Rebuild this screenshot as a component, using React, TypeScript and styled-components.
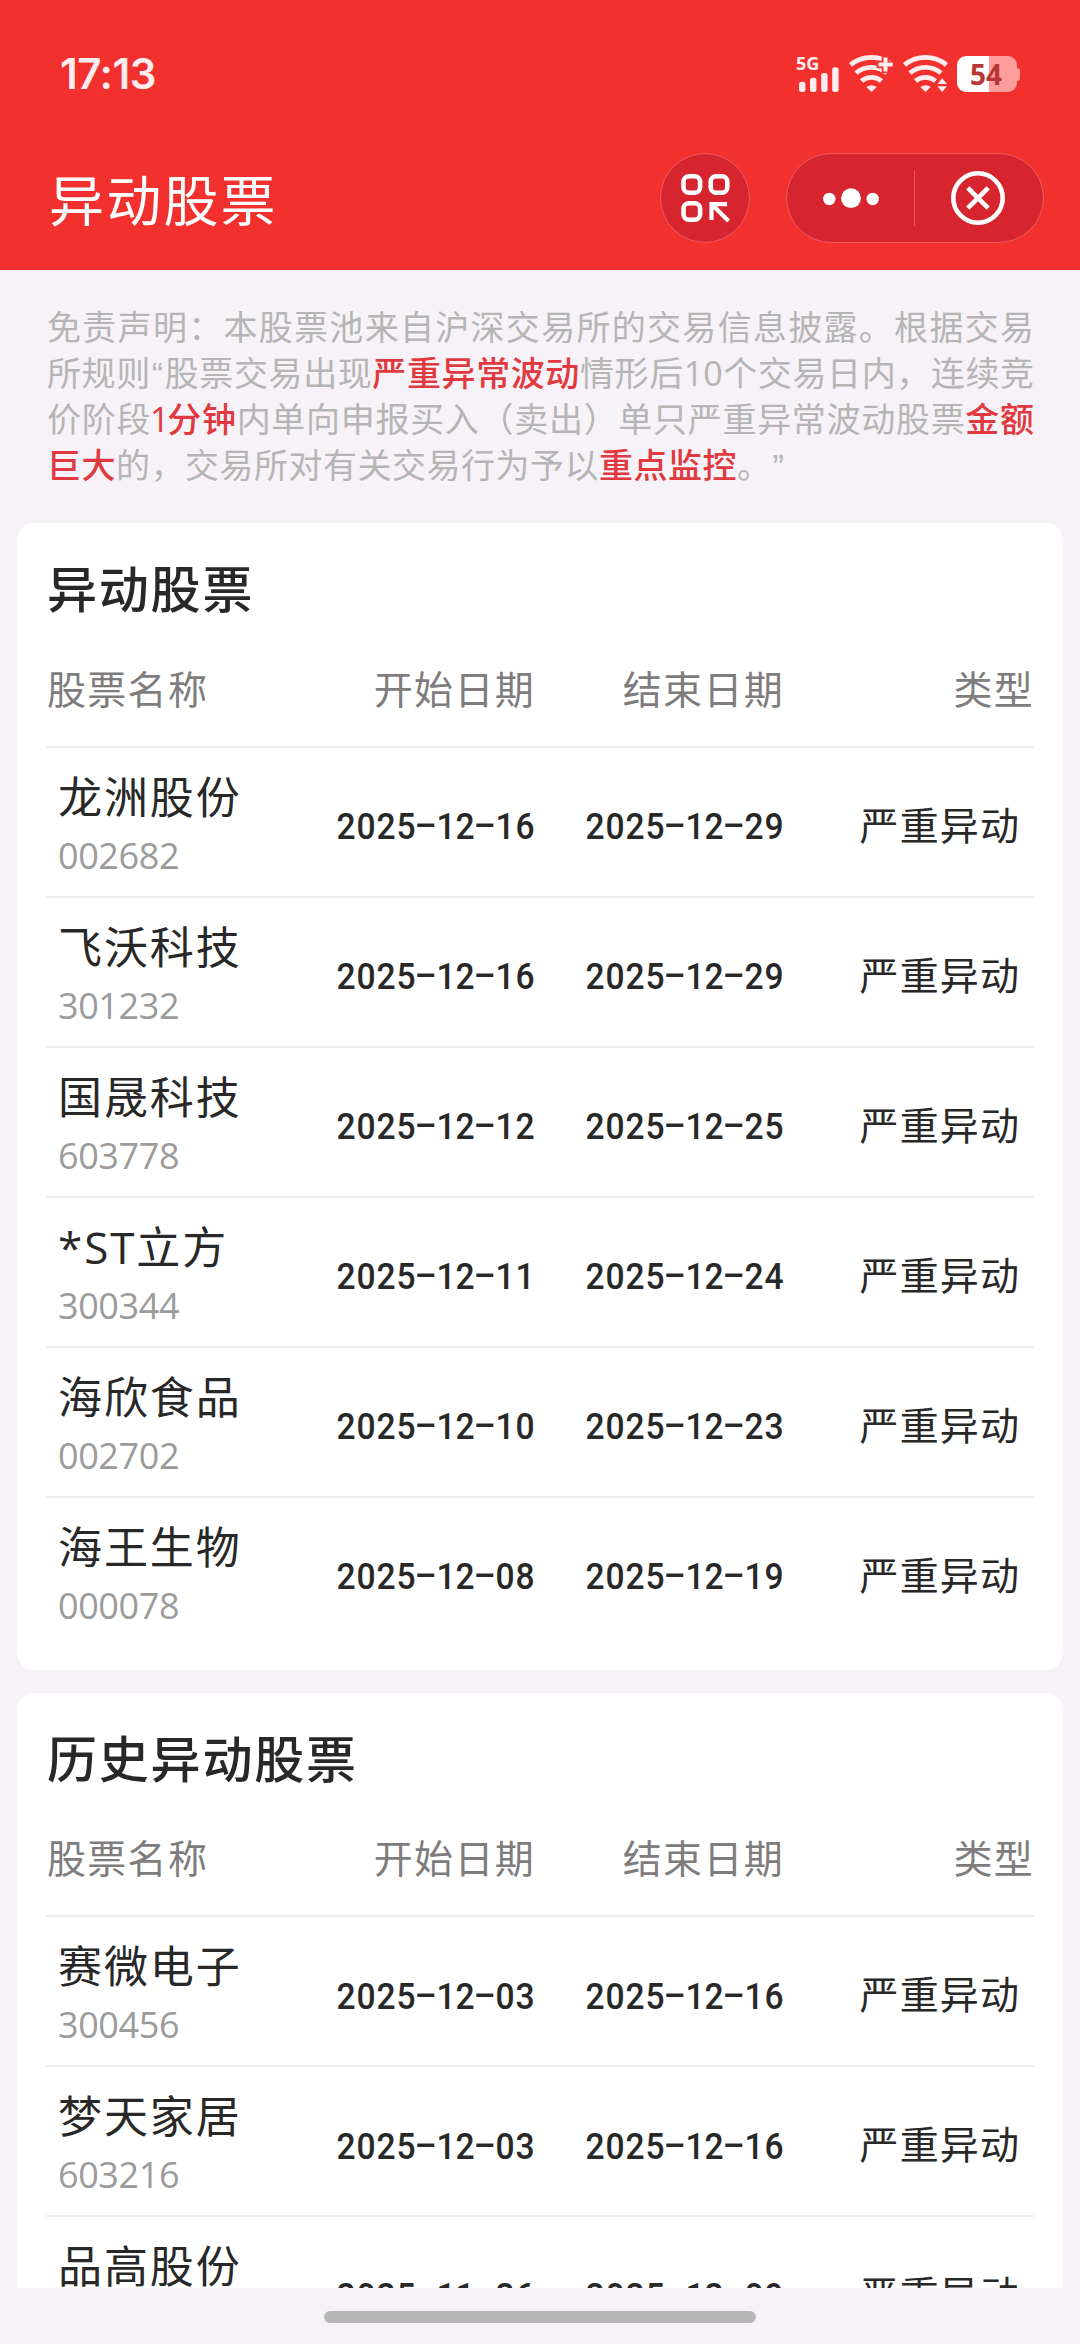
import React from 'react';
import styled, { createGlobalStyle } from 'styled-components';

const GlobalStyle = createGlobalStyle`
  html, body { margin: 0; padding: 0; background: #f7f2f7; }
  * { box-sizing: border-box; }
`;

const sans = `"Open Sans", "Noto Sans CJK SC", sans-serif`;

const Screen = styled.div`
  width: 1080px;
  height: 2344px;
  display: flex;
  flex-direction: column;
  overflow: hidden;
  background: #f7f2f7;
  color: #282828;
  font-family: ${sans};
`;

const Header = styled.header`
  flex: none;
  height: 270px;
  background: #f2312f;
  color: #fff;
`;

const StatusBar = styled.div`
  height: 148px;
  padding: 0 60px 0 60px;
  display: flex;
  align-items: center;
  justify-content: space-between;
`;

const Clock = styled.span`
  font-family: Inter, sans-serif;
  font-weight: 600;
  font-size: 42px;
  line-height: 50px;
  letter-spacing: -0.5px;
  color: #ffecee;
`;

const StatusIcons = styled.div`
  display: flex;
  align-items: center;
`;

const Signal = styled.div`
  width: 52px;
  height: 36px;
  position: relative;
`;

const NetworkLabel = styled.span`
  position: absolute;
  left: -1px;
  top: -2px;
  font-size: 18px;
  line-height: 18px;
  font-weight: 700;
  color: #ffecee;
`;

const Glyph = styled.svg`
  display: block;
  overflow: visible;
`;

const Battery = styled.div`
  display: flex;
  align-items: center;
  margin-left: 7px;
`;

const BatteryBody = styled.div`
  width: 60px;
  height: 36px;
  padding-right: 2px;
  border-radius: 9px;
  display: flex;
  align-items: center;
  justify-content: center;
  background: linear-gradient(90deg, #fff 32px, #fd9d9b 32px);
  color: #b83636;
  font-size: 28px;
  line-height: 36px;
  font-weight: 700;
`;

const BatteryTip = styled.div`
  width: 3px;
  height: 13px;
  border-radius: 0 3px 3px 0;
  background: #fd9d9b;
`;

const NavBar = styled.div`
  display: flex;
  align-items: center;
  padding: 5px 36px 0 49px;
`;

const NavTitle = styled.h1`
  flex: 1;
  margin: 0;
  padding-top: 4px;
  font-size: 55px;
  line-height: 86px;
  font-weight: 400;
  letter-spacing: 2.2px;
`;

const RoundButton = styled.button`
  width: 90px;
  height: 90px;
  padding: 0;
  margin-right: 36px;
  display: flex;
  align-items: center;
  justify-content: center;
  border: 1px solid #ee5a60;
  border-radius: 50%;
  background: #d72530;
`;

const Capsule = styled.div`
  width: 258px;
  height: 90px;
  display: flex;
  align-items: center;
  border: 1px solid #ee5a60;
  border-radius: 45px;
  background: #d72530;
`;

const CapsuleButton = styled.button<{ $first?: boolean }>`
  width: ${p => (p.$first ? 128 : 126)}px;
  height: 56px;
  padding: 0;
  display: flex;
  align-items: center;
  justify-content: center;
  border: 0;
  border-right: ${p => (p.$first ? '1px solid #e7545b' : '0')};
  background: none;
`;

const Content = styled.main`
  flex: none;
  height: 2018px;
  overflow: hidden;
  padding: 34px 17px 0;
  display: flex;
  flex-direction: column;
`;

const Disclaimer = styled.section`
  flex: none;
  height: 219px;
  padding: 0 29px;
`;

const DisclaimerLine = styled.p<{ $last?: boolean }>`
  margin: 0;
  width: ${p => (p.$last ? 'auto' : '988px')};
  padding-left: 1px;
  white-space: nowrap;
  font-size: 34px;
  line-height: 46px;
  color: #b5b5b5;
  letter-spacing: ${p => (p.$last ? '0.5px' : '0')};
  text-align-last: ${p => (p.$last ? 'left' : 'justify')};
  text-spacing-trim: space-all;
`;

const Alert = styled.em`
  font-style: normal;
  font-weight: 500;
  color: #e03a40;
`;

const Quote = styled.span`
  margin: 0 1px;
  font-family: "Liberation Sans", sans-serif;
  line-height: 1;
`;

const NarrowDigit = styled.span`
  margin: 0 -3px 0 -1px;
`;

const Card = styled.section`
  flex: none;
  margin-bottom: 23px;
  padding: 31px 29px 22px;
  border-radius: 17px;
  background: #fff;
`;

const CardTitle = styled.h2`
  margin: 0;
  padding-left: 1px;
  font-size: 50px;
  line-height: 70px;
  font-weight: 500;
  letter-spacing: 1.8px;
`;

const Columns = styled.div`
  display: grid;
  grid-template-columns: 240px 249px 249px 250px;
  align-items: center;
`;

const TableHead = styled(Columns)`
  height: 123.5px;
  padding-top: 8px;
  border-bottom: 2px solid #eeeeee;
  font-size: 39px;
  line-height: 60px;
  letter-spacing: 1.3px;
  color: #7e7c7d;
`;

const HeadCell = styled.span<{ $right?: boolean }>`
  padding-left: 1px;
  text-align: ${p => (p.$right ? 'right' : 'left')};
`;

const Row = styled(Columns)`
  height: 150px;
  border-bottom: 2px solid #eeeeee;
  &:last-child { border-bottom-color: transparent; }
`;

const NameCell = styled.div`
  padding: 10px 0 0 12px;
  display: flex;
  flex-direction: column;
`;

const StockName = styled.span`
  font-size: 44px;
  line-height: 58px;
  letter-spacing: 1.9px;
  white-space: nowrap;
`;

const StockCode = styled.span`
  font-size: 36px;
  line-height: 60px;
  letter-spacing: -0.4px;
  color: #9b9b9b;
`;

const DateCell = styled.span`
  display: flex;
  justify-content: flex-end;
  padding-top: 11px;
  font-family: Roboto, sans-serif;
  font-weight: 500;
  font-size: 36.5px;
  line-height: 48px;
`;

const DateChar = styled.span<{ $dash: boolean }>`
  width: 19.9px;
  display: flex;
  justify-content: center;
  transform: ${p => (p.$dash ? 'translateY(-2px) scaleX(1.8)' : 'scaleX(0.92)')};
`;

const TypeCell = styled.span`
  padding: 6px 14px 0 0;
  text-align: right;
  font-size: 39px;
  line-height: 60px;
  letter-spacing: 1.1px;
`;

const HomeArea = styled.footer`
  flex: 1;
  display: flex;
  justify-content: center;
  padding-top: 23px;
`;

const HomeIndicator = styled.div`
  width: 432px;
  height: 12px;
  border-radius: 6px;
  background: #b5b6b5;
`;

type Stock = { name: string; code: string; start: string; end: string };

const current: Stock[] = [
  { name: '龙洲股份', code: '002682', start: '2025-12-16', end: '2025-12-29' },
  { name: '飞沃科技', code: '301232', start: '2025-12-16', end: '2025-12-29' },
  { name: '国晟科技', code: '603778', start: '2025-12-12', end: '2025-12-25' },
  { name: '*ST立方', code: '300344', start: '2025-12-11', end: '2025-12-24' },
  { name: '海欣食品', code: '002702', start: '2025-12-10', end: '2025-12-23' },
  { name: '海王生物', code: '000078', start: '2025-12-08', end: '2025-12-19' },
];

const history: Stock[] = [
  { name: '赛微电子', code: '300456', start: '2025-12-03', end: '2025-12-16' },
  { name: '梦天家居', code: '603216', start: '2025-12-03', end: '2025-12-16' },
  { name: '品高股份', code: '688227', start: '2025-11-26', end: '2025-12-09' },
];

function DateText({ value }: { value: string }) {
  return (
    <DateCell>
      {value.split('').map((c, i) => (
        <DateChar key={i} $dash={c === '-'}>{c}</DateChar>
      ))}
    </DateCell>
  );
}

function StockTable({ title, stocks }: { title: string; stocks: Stock[] }) {
  return (
    <Card>
      <CardTitle>{title}</CardTitle>
      <TableHead>
        <HeadCell>股票名称</HeadCell>
        <HeadCell $right>开始日期</HeadCell>
        <HeadCell $right>结束日期</HeadCell>
        <HeadCell $right>类型</HeadCell>
      </TableHead>
      <div>
        {stocks.map(s => (
          <Row key={s.code}>
            <NameCell>
              <StockName>{s.name}</StockName>
              <StockCode>{s.code}</StockCode>
            </NameCell>
            <DateText value={s.start} />
            <DateText value={s.end} />
            <TypeCell>严重异动</TypeCell>
          </Row>
        ))}
      </div>
    </Card>
  );
}

function SignalBars() {
  return (
    <Signal>
      <NetworkLabel>5G</NetworkLabel>
      <Glyph width="52" height="36" viewBox="0 0 52 36" fill="#ffecee">
        <rect x="2" y="25.7" width="6.4" height="10.3" rx="2.5" />
        <rect x="13" y="21.7" width="6.4" height="14.3" rx="2.5" />
        <rect x="24.2" y="17" width="6.4" height="19" rx="2.5" />
        <rect x="35.2" y="11.3" width="6.4" height="24.7" rx="2.5" />
      </Glyph>
    </Signal>
  );
}

function WifiArcs() {
  return (
    <>
      <path d="M1.5 8.9 A33 33 0 0 1 43.5 8.9" />
      <path d="M7 17 A24 24 0 0 1 38 17" />
      <path d="M12.5 25 A15.5 15.5 0 0 1 32.5 25" />
    </>
  );
}

function WifiPlus() {
  return (
    <Glyph width="54" height="36" viewBox="0 0 54 36" fill="none" stroke="#ffecee" strokeWidth="4.8">
      <WifiArcs />
      <path d="M22.5 36 L17.3 31 Q22.5 27.4 27.7 31 Z" fill="#ffecee" stroke="none" />
      <path d="M36.5 0V17M27.6 8.5H45" stroke="#f2312f" strokeWidth="7.5" />
      <path d="M36.5 1.5V15.5M29.5 8.5H43.8" strokeWidth="4" />
    </Glyph>
  );
}

function WifiTransfer() {
  return (
    <Glyph width="47" height="36" viewBox="0 0 47 36" fill="none" stroke="#ffecee" strokeWidth="4.8">
      <WifiArcs />
      <path d="M22.5 36 L17.3 31 Q22.5 27.4 27.7 31 Z" fill="#ffecee" stroke="none" />
      <path d="M32 28.7 L32 27 L39.2 19 L46.4 27 V36 H32 Z" fill="#f2312f" stroke="none" />
      <path d="M39.2 22.2 L44 28 H34.4 Z M39.2 36 L34.4 30.2 H44 Z" fill="#ffecee" stroke="none" />
    </Glyph>
  );
}

export default function App() {
  return (
    <Screen>
      <GlobalStyle />
      <Header>
        <StatusBar>
          <Clock>17:13</Clock>
          <StatusIcons>
            <SignalBars />
            <WifiPlus />
            <WifiTransfer />
            <Battery>
              <BatteryBody>54</BatteryBody>
              <BatteryTip />
            </Battery>
          </StatusIcons>
        </StatusBar>
        <NavBar>
          <NavTitle>异动股票</NavTitle>
          <RoundButton>
            <Glyph width="49" height="48" viewBox="0 0 49 48" fill="none" stroke="#fff" strokeWidth="4.6">
              <rect x="2.5" y="2.3" width="16.6" height="16.4" rx="5.5" />
              <rect x="29.7" y="2.3" width="16.6" height="16.4" rx="5.5" />
              <rect x="2.5" y="29.3" width="16.6" height="16.4" rx="5.5" />
              <path d="M46.1 30.1H30.5V46M31 30.6L47.5 47" strokeWidth="4.2" />
            </Glyph>
          </RoundButton>
          <Capsule>
            <CapsuleButton $first>
              <Glyph width="56" height="20" viewBox="0 0 56 20" fill="#fff">
                <circle cx="6.3" cy="11" r="6.2" />
                <circle cx="28" cy="10.2" r="9.9" />
                <circle cx="49.7" cy="11" r="6.2" />
              </Glyph>
            </CapsuleButton>
            <CapsuleButton>
              <Glyph width="54" height="54" viewBox="0 0 54 54" fill="none" stroke="#fff" strokeWidth="4.6">
                <circle cx="27" cy="27" r="24.7" />
                <path d="M16.8 16.8L37.2 37.2M37.2 16.8L16.8 37.2" />
              </Glyph>
            </CapsuleButton>
          </Capsule>
        </NavBar>
      </Header>
      <Content>
        <Disclaimer>
          <DisclaimerLine>免责声明：本股票池来自沪深交易所的交易信息披露。根据交易</DisclaimerLine>
          <DisclaimerLine>所规则<Quote>“</Quote>股票交易出现<Alert>严重异常波动</Alert>情形后10个交易日内，连续竞</DisclaimerLine>
          <DisclaimerLine>价阶段<Alert><NarrowDigit>1</NarrowDigit>分钟</Alert>内单向申报买入（卖出）单只严重异常波动股票<Alert>金额</Alert></DisclaimerLine>
          <DisclaimerLine $last><Alert>巨大</Alert>的，交易所对有关交易行为予以<Alert>重点监控</Alert>。<Quote>”</Quote></DisclaimerLine>
        </Disclaimer>
        <StockTable title="异动股票" stocks={current} />
        <StockTable title="历史异动股票" stocks={history} />
      </Content>
      <HomeArea>
        <HomeIndicator />
      </HomeArea>
    </Screen>
  );
}
